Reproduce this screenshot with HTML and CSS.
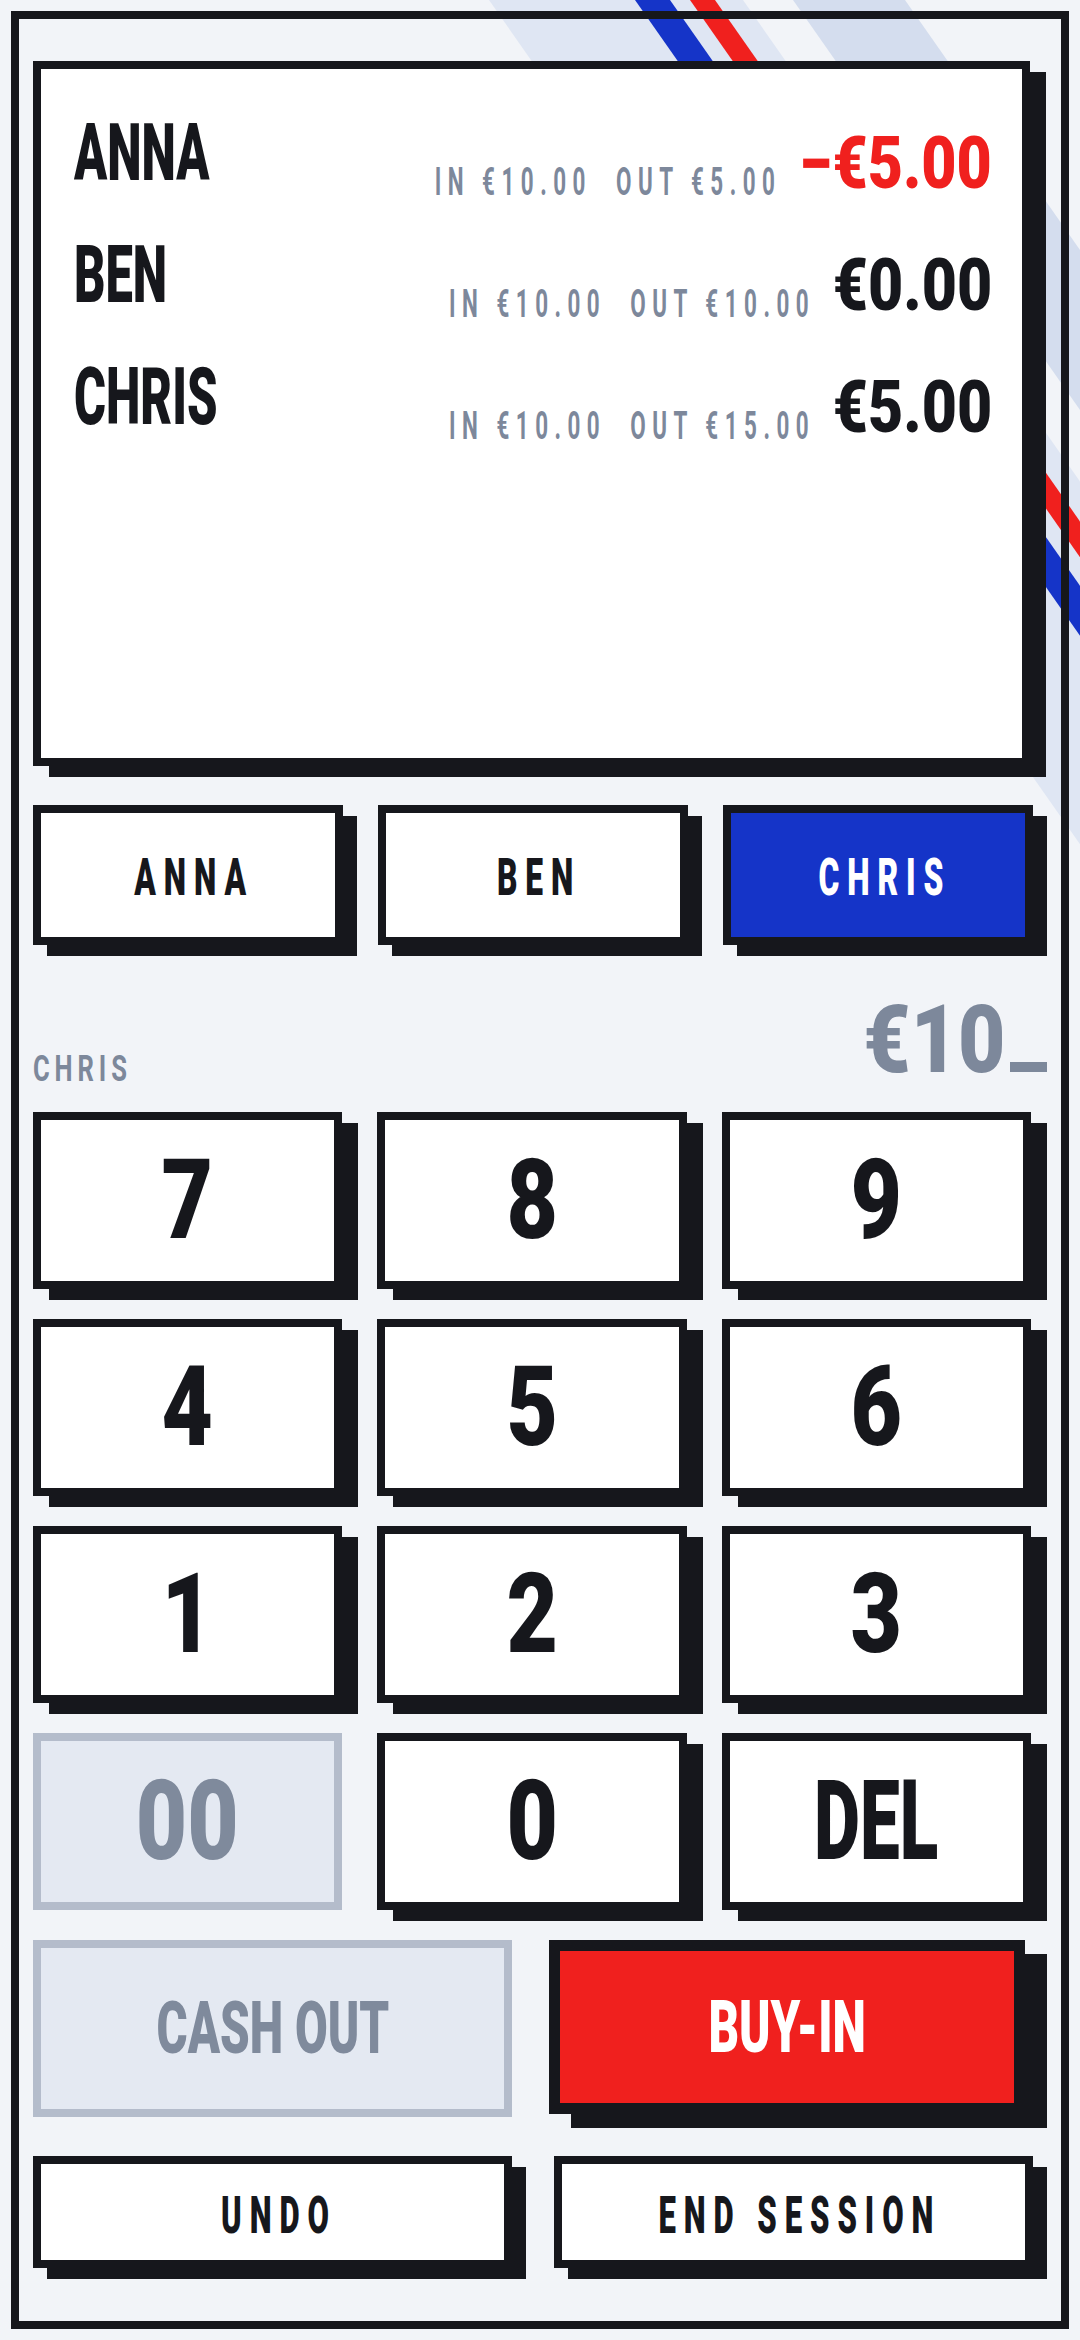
FILE: index.html
```html
<!DOCTYPE html>
<html lang="en">
<head>
<meta charset="utf-8">
<title>Poker Ledger</title>
<link rel="stylesheet" href="styles.css">
</head>
<body>
<svg class="stripes" width="1080" height="2340" viewBox="0 0 1080 2340" aria-hidden="true">
  <polygon class="band1" points="489,0 743,0 1443,1000 1189,1000"/>
  <polygon class="band2" points="793,0 905,0 1605,1000 1493,1000"/>
  <polygon class="blue" points="635,0 670,0 1370,1000 1335,1000"/>
  <polygon class="red" points="690,0 715,0 1415,1000 1390,1000"/>
</svg>
<main class="frame">
  <section class="ledger">
    <div class="row">
      <span class="name"><span class="t">ANNA</span></span>
      <span class="stats"><span class="meta">IN €10.00&nbsp;&nbsp;OUT €5.00</span><span class="bal neg">−€5.00</span></span>
    </div>
    <div class="row">
      <span class="name"><span class="t">BEN</span></span>
      <span class="stats"><span class="meta">IN €10.00&nbsp;&nbsp;OUT €10.00</span><span class="bal">€0.00</span></span>
    </div>
    <div class="row">
      <span class="name"><span class="t">CHRIS</span></span>
      <span class="stats"><span class="meta">IN €10.00&nbsp;&nbsp;OUT €15.00</span><span class="bal">€5.00</span></span>
    </div>
  </section>

  <div class="players">
    <button class="btn pbtn"><span class="t">ANNA</span></button>
    <button class="btn pbtn"><span class="t">BEN</span></button>
    <button class="btn pbtn active"><span class="t">CHRIS</span></button>
  </div>

  <div class="entry">
    <span class="who"><span class="t">CHRIS</span></span>
    <span class="amount"><span class="t">€10</span><i class="cursor"></i></span>
  </div>

  <div class="keypad">
    <button class="btn key"><span class="t">7</span></button>
    <button class="btn key"><span class="t">8</span></button>
    <button class="btn key"><span class="t">9</span></button>
    <button class="btn key"><span class="t">4</span></button>
    <button class="btn key"><span class="t">5</span></button>
    <button class="btn key"><span class="t">6</span></button>
    <button class="btn key"><span class="t">1</span></button>
    <button class="btn key"><span class="t">2</span></button>
    <button class="btn key"><span class="t">3</span></button>
    <button class="btn key disabled"><span class="t">00</span></button>
    <button class="btn key"><span class="t">0</span></button>
    <button class="btn key del"><span class="t">DEL</span></button>
  </div>

  <div class="actions">
    <button class="btn big disabled"><span class="t">CASH OUT</span></button>
    <button class="btn big primary"><span class="t">BUY-IN</span></button>
  </div>

  <div class="footer">
    <button class="btn small"><span class="t">UNDO</span></button>
    <button class="btn small"><span class="t">END SESSION</span></button>
  </div>
</main>
</body>
</html>
```

FILE: styles.css
```css
html, body {
  margin: 0;
  padding: 0;
}
body {
  width: 1080px;
  height: 2340px;
  overflow: hidden;
  position: relative;
  background: #f2f4f8;
  font-family: Roboto, "Liberation Sans", sans-serif;
  color: #16171c;
}
.stripes {
  position: absolute;
  top: 0;
  left: 0;
  z-index: 0;
}
.band1 { fill: #dfe6f3; }
.band2 { fill: #d4ddee; }
.blue { fill: #1534c8; }
.red { fill: #f0201e; }

.frame {
  position: relative;
  z-index: 1;
  box-sizing: border-box;
  margin: 11px;
  width: 1058px;
  height: 2318px;
  border: 8px solid #16171c;
  padding: 42px 14px 0 14px;
  display: flex;
  flex-direction: column;
}

.t {
  display: inline-block;
  white-space: nowrap;
  transform: scaleX(var(--sx, 1));
  transform-origin: 50% 50%;
}

/* ledger card */
.ledger {
  box-sizing: border-box;
  height: 705px;
  margin-right: 17px;
  background: #fff;
  border: 8px solid #16171c;
  box-shadow: 16px 11px 0 #16171c;
  padding: 44px 30px 0 33px;
}
.row {
  height: 122px;
  display: flex;
  align-items: flex-start;
}
.name {
  flex: 0 1 auto;
  min-width: 0;
  font-size: 80px;
  font-weight: 900;
  line-height: 1;
  white-space: nowrap;
}
.name .t {
  --sx: .61;
  transform-origin: 0 50%;
}
.stats {
  flex: none;
  margin-left: auto;
  display: inline-flex;
  align-items: flex-start;
  gap: 21px;
  transform: scaleX(.845);
  transform-origin: 100% 0;
  white-space: nowrap;
}
.meta {
  display: inline-block;
  margin-top: 50px;
  font-size: 38px;
  font-weight: 700;
  line-height: 1;
  letter-spacing: 11px;
  color: #7d889b;
  transform: scaleX(.698);
  transform-origin: 100% 0;
}
.bal {
  display: inline-block;
  margin-top: 15px;
  font-size: 72px;
  font-weight: 900;
  line-height: 1;
}
.bal.neg { color: #f0201e; }

/* buttons */
.btn {
  appearance: none;
  -webkit-appearance: none;
  margin: 0;
  padding: 0;
  box-sizing: border-box;
  border: 8px solid #16171c;
  background: #fff;
  color: #16171c;
  font-family: inherit;
  font-weight: 900;
  line-height: 1;
  display: flex;
  align-items: center;
  justify-content: center;
  border-radius: 0;
}

.players {
  margin-top: 39px;
  padding-right: 14px;
  display: grid;
  grid-template-columns: repeat(3, 1fr);
  column-gap: 35px;
  height: 140px;
}
.pbtn {
  height: 140px;
  box-shadow: 14px 11px 0 #16171c;
  font-size: 52px;
  padding-top: 6px;
}
.pbtn .t {
  --sx: .61;
  letter-spacing: 13px;
  margin-right: -13px;
}
.pbtn.active {
  background: #1534c8;
  color: #fff;
}

.entry {
  margin-top: 48px;
  height: 94px;
  margin-bottom: 25px;
  display: flex;
  justify-content: space-between;
  align-items: flex-end;
  color: #7d889b;
}
.who {
  font-size: 36.5px;
  font-weight: 700;
  line-height: 1;
}
.who .t {
  --sx: .7;
  letter-spacing: 7px;
  transform-origin: 0 50%;
}
.amount {
  display: flex;
  align-items: baseline;
  font-size: 94px;
  font-weight: 900;
  line-height: 1;
}
.amount .t {
  --sx: .87;
  transform-origin: 100% 50%;
}
.cursor {
  display: inline-block;
  width: 37px;
  height: 10px;
  margin-left: 5px;
  background: #7d889b;
}

.keypad {
  padding-right: 16px;
  display: grid;
  grid-template-columns: repeat(3, 1fr);
  grid-auto-rows: 177px;
  column-gap: 35px;
  row-gap: 30px;
}
.key {
  box-shadow: 16px 11px 0 #16171c;
  font-size: 111px;
}
.key .t { --sx: .8; }
.key.del .t { --sx: .64; }

.btn.disabled {
  background: #e4e9f2;
  border-color: #b4bccb;
  color: #7f8a9c;
  box-shadow: none;
}

.actions {
  margin-top: 30px;
  padding-right: 14px;
  display: grid;
  grid-template-columns: repeat(2, 1fr);
  column-gap: 42px;
  height: 177px;
  align-items: start;
}
.big {
  height: 177px;
  font-size: 73px;
}
.big .t { --sx: .65; }
.big.primary {
  margin-left: -5px;
  width: 476px;
  height: 174px;
  border-width: 11px;
  background: #f0201e;
  color: #fff;
  box-shadow: 22px 14px 0 #16171c;
}

.footer {
  margin-top: 39px;
  padding-right: 14px;
  display: grid;
  grid-template-columns: repeat(2, 1fr);
  column-gap: 42px;
  height: 112px;
}
.small {
  height: 112px;
  font-size: 51px;
  padding-top: 6px;
  box-shadow: 14px 11px 0 #16171c;
}
.small .t {
  --sx: .61;
  letter-spacing: 13px;
  margin-right: -13px;
}
```
